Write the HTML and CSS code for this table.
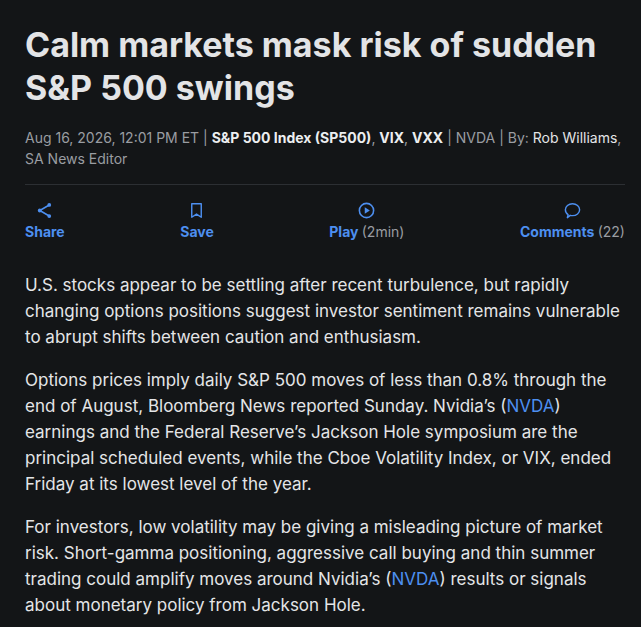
FILE: index.html
```html
<!DOCTYPE html>
<html lang="en">
<head>
<meta charset="utf-8">
<title>Calm markets mask risk of sudden S&amp;P 500 swings</title>
<link rel="stylesheet" href="styles.css">
</head>
<body>
<article class="article">
  <h1 class="title">Calm markets mask risk of sudden S&amp;P 500 swings</h1>
  <div class="meta">Aug 16, 2026, 12:01 PM ET | <b class="strong">S&amp;P 500 Index (SP500)</b>, <b class="strong">VIX</b>, <b class="strong">VXX</b> | NVDA | By: <span class="author">Rob Williams</span>, SA News Editor</div>
  <div class="actions">
    <a class="action">
      <svg class="icon" viewBox="0 0 24 24"><circle cx="18" cy="5" r="2.4" fill="currentColor"/><circle cx="6" cy="12" r="2.4" fill="currentColor"/><circle cx="18" cy="19" r="2.4" fill="currentColor"/><path d="M18 5 6 12l12 7" fill="none" stroke="currentColor" stroke-width="2"/></svg>
      <span class="label">Share</span>
    </a>
    <a class="action">
      <svg class="icon" viewBox="0 0 24 24"><path d="M6 3.5h12v17l-6-4-6 4z" fill="none" stroke="currentColor" stroke-width="1.8" stroke-linejoin="round"/></svg>
      <span class="label">Save</span>
    </a>
    <a class="action">
      <svg class="icon" viewBox="0 0 24 24"><circle cx="12" cy="12" r="9" fill="none" stroke="currentColor" stroke-width="2"/><path d="M9.8 7.8v8.4l6.4-4.2z" fill="currentColor"/></svg>
      <span class="label">Play <span class="count">(2min)</span></span>
    </a>
    <a class="action">
      <svg class="icon" viewBox="0 0 24 24"><path d="M12 3.5c5 0 9 3.3 9 7.5s-4 7.5-9 7.5c-1 0-2-.1-2.9-.4L5.5 21l.9-3.8C4.3 15.8 3 13.5 3 11c0-4.2 4-7.5 9-7.5z" fill="none" stroke="currentColor" stroke-width="1.8" stroke-linejoin="round"/></svg>
      <span class="label">Comments <span class="count">(22)</span></span>
    </a>
  </div>
  <div class="body">
    <p>U.S. stocks appear to be settling after recent turbulence, but rapidly changing options positions suggest investor sentiment remains vulnerable to abrupt shifts between caution and enthusiasm.</p>
    <p>Options prices imply daily S&amp;P 500 moves of less than 0.8% through the end of August, Bloomberg News reported Sunday. Nvidia’s (<a class="ticker">NVDA</a>) earnings and the Federal Reserve’s Jackson Hole symposium are the principal scheduled events, while the Cboe Volatility Index, or VIX, ended Friday at its lowest level of the year.</p>
    <p>For investors, low volatility may be giving a misleading picture of market risk. Short-gamma positioning, aggressive call buying and thin summer trading could amplify moves around Nvidia’s (<a class="ticker">NVDA</a>) results or signals about monetary policy from Jackson Hole.</p>
  </div>
</article>
</body>
</html>
```
FILE: styles.css
```css
html, body {
  margin: 0;
  padding: 0;
  background: #131517;
}
body {
  font-family: Inter, Roboto, "Liberation Sans", sans-serif;
  color: #e4e5e7;
}
.article {
  padding: 23px 16px 0 25px;
}
.title {
  margin: 0;
  font-size: 34px;
  line-height: 43px;
  font-weight: 700;
  color: #e3e4e6;
  letter-spacing: 0;
}
.meta {
  margin-top: 18px;
  font-size: 14px;
  line-height: 21px;
  color: #9a9da2;
  padding-bottom: 15px;
  border-bottom: 1px solid #2c2f33;
}
.meta .strong {
  color: #eceef0;
  font-weight: 700;
}
.meta .author {
  color: #e4e5e7;
}
.actions {
  display: flex;
  justify-content: space-between;
  padding: 16px 0 0;
}
.action {
  display: flex;
  flex-direction: column;
  align-items: center;
  gap: 3px;
  color: #4d8ff0;
}
.icon {
  width: 19px;
  height: 19px;
  display: block;
}
.label {
  font-size: 14px;
  line-height: 18px;
  font-weight: 700;
}
.count {
  color: #9a9da2;
  font-weight: 400;
}
.body {
  margin-top: 31px;
}
.body p {
  margin: 0 0 17px;
  font-size: 17px;
  line-height: 26px;
}
.ticker {
  color: #4d8ff0;
}
```
